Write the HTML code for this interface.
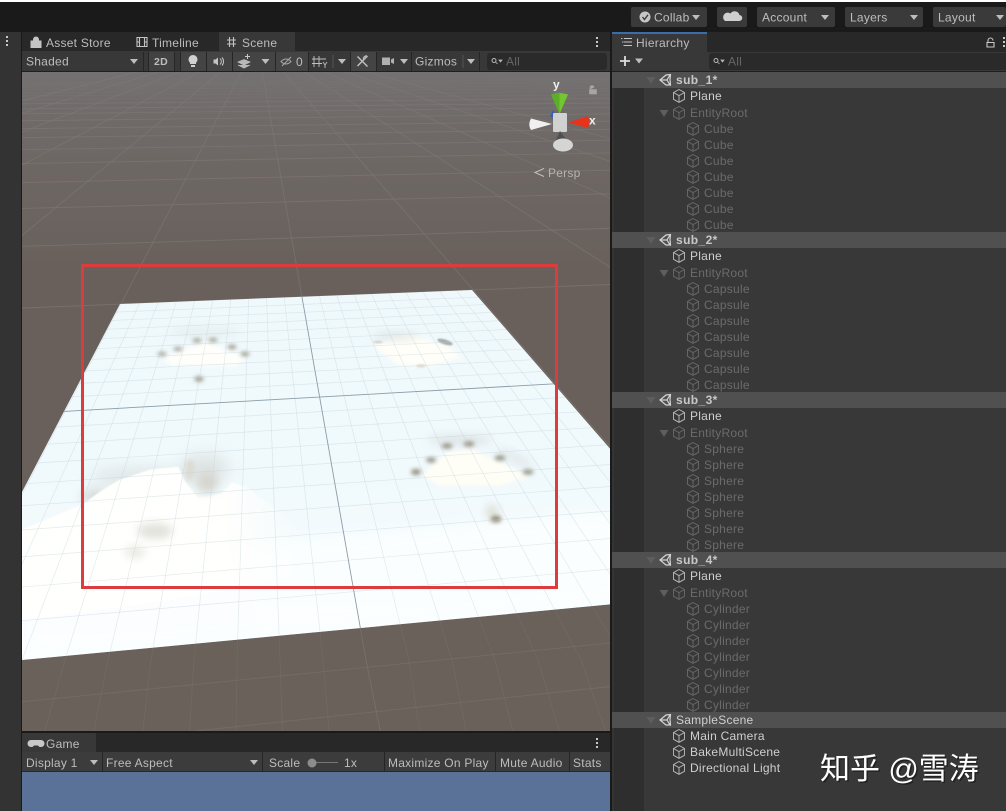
<!DOCTYPE html>
<html><head><meta charset="utf-8"><title>Unity Editor</title>
<style>
html,body{margin:0;padding:0;background:#1a1a1b;width:1006px;height:811px;overflow:hidden}
svg{display:block}
text{font-family:"Liberation Sans","Noto Sans CJK SC",sans-serif;font-size:12px;letter-spacing:.25px;fill:#bdbdbd}
.g text,text.d{fill:#6b6b6b}
.h{font-weight:bold;fill:#c8c8c8;letter-spacing:.4px}
.w{fill:#cfcfcf}
</style></head><body>
<svg width="1006" height="811" viewBox="0 0 1006 811" xmlns="http://www.w3.org/2000/svg">
<defs>
<linearGradient id="gnd" x1="0" y1="0" x2="0" y2="1"><stop offset="0" stop-color="#747172"/><stop offset=".08" stop-color="#6f6a68"/><stop offset=".3" stop-color="#69605b"/><stop offset="1" stop-color="#6b615b"/></linearGradient>
<linearGradient id="pl" x1="0" y1="0" x2="0" y2="1"><stop offset="0" stop-color="#eff9fc"/><stop offset=".5" stop-color="#f0f9fc"/><stop offset="1" stop-color="#f9feff"/></linearGradient>
<linearGradient id="wf" gradientUnits="userSpaceOnUse" x1="225" y1="0" x2="300" y2="0"><stop offset="0" stop-color="#fffffd"/><stop offset="1" stop-color="#fffffd" stop-opacity="0"/></linearGradient>
<clipPath id="sc"><rect x="22" y="72" width="588" height="659"/></clipPath>
<clipPath id="lo"><rect x="22" y="590" width="588" height="141"/></clipPath>
<clipPath id="pc"><polygon points="120,304 472,290 646,490 646,601 22,660 22,492"/></clipPath>
<filter id="b1" x="-50%" y="-50%" width="200%" height="200%"><feGaussianBlur stdDeviation=".8"/></filter>
<filter id="b2" x="-50%" y="-50%" width="200%" height="200%"><feGaussianBlur stdDeviation="2"/></filter>
<filter id="b4" x="-50%" y="-50%" width="200%" height="200%"><feGaussianBlur stdDeviation="4.5"/></filter>
<filter id="b8" x="-50%" y="-50%" width="200%" height="200%"><feGaussianBlur stdDeviation="8"/></filter>
<g id="cb" fill="none" stroke-width=".9" stroke-linejoin="round"><path d="M0-6.5 5.5-3.5V3.3L0 6.3-5.5 3.3V-3.5ZM-5.5-3.5 0-.4 5.5-3.5M0-.4V6.3"/></g>
<g id="un" fill="none" stroke="#d4d4d4" stroke-width="1.200"><path d="M-5 0 1-5 5.500-5.500 5-.5 5.500 5 1 5ZM-5 0H2L5-5M2 0 5 5"/></g>
<path id="ar" d="M-4-2H4L0 3Z" fill="#bdbdbd"/>
<path id="tr" d="M-4.500-3H4.500L0 4Z" fill="#5e5e5e"/>
</defs>

<!-- base -->
<rect width="1006" height="811" fill="#1a1a1b"/>
<rect width="1006" height="2" fill="#fff"/>
<rect x="0" y="32" width="21" height="779" fill="#333"/>

<!-- top toolbar -->
<g fill="#3a3a3a">
<rect x="631" y="7" width="76" height="20" rx="2"/><rect x="717" y="7" width="30" height="20" rx="2"/>
<rect x="757" y="7" width="78" height="20" rx="2"/><rect x="845" y="7" width="78" height="20" rx="2"/><rect x="933" y="7" width="73" height="20" rx="2"/>
</g>
<circle cx="645" cy="17" r="5.500" fill="#c6c6c6"/><path d="M642.500 17 644.500 19.500 648 14.800" fill="none" stroke="#3a3a3a" stroke-width="1.400"/>
<text x="654" y="21.500">Collab</text><use href="#ar" x="696" y="17"/>
<path d="M725 21h14a3 3 0 0 0 .5-6 5 5 0 0 0-9-1.500 3.700 3.700 0 0 0-5.500 7.500Z" fill="#cfcfcf"/>
<text x="762" y="21.500">Account</text><use href="#ar" x="825" y="17"/>
<text x="850" y="21.500">Layers</text><use href="#ar" x="914" y="17"/>
<text x="938" y="21.500">Layout</text><use href="#ar" x="1000" y="17"/>

<!-- left strip dots -->
<g fill="#c8c8c8"><rect x="6" y="36" width="2" height="2"/><rect x="6" y="40" width="2" height="2"/><rect x="6" y="44" width="2" height="2"/></g>

<!-- scene tabs -->
<rect x="22" y="32" width="588" height="19" fill="#282828"/>
<rect x="219" y="32" width="76" height="20" fill="#383838"/>
<path d="M31 41h10v6.500H31ZM33.500 41v-1.500a2.500 2.500 0 0 1 5 0V41" fill="#c4c4c4" stroke="#c4c4c4"/>
<text x="46" y="47">Asset Store</text>
<path d="M137 37.500h10v9h-10ZM139.500 37.500v9M144.500 37.500v9M137 42h2.500M144.500 42h2.500" fill="none" stroke="#c4c4c4" stroke-width="1.100"/>
<text x="152" y="47">Timeline</text>
<path d="M229.500 37v10M233.500 37v10M227 40h9M227 44h9" fill="none" stroke="#c4c4c4" stroke-width="1.100"/>
<text x="242" y="47">Scene</text>
<g fill="#c8c8c8"><rect x="596" y="37" width="2" height="2"/><rect x="596" y="41" width="2" height="2"/><rect x="596" y="45" width="2" height="2"/></g>

<!-- scene toolbar -->
<rect x="22" y="51" width="588" height="21" fill="#383838"/>
<g fill="#444"><rect x="181" y="52" width="52" height="19"/><rect x="233" y="52" width="42" height="19"/><rect x="276" y="52" width="33" height="19"/><rect x="351" y="52" width="25" height="19"/></g>
<g fill="#262626"><rect x="143" y="52" width="1" height="20"/><rect x="148" y="52" width="1" height="20"/><rect x="174" y="52" width="1" height="20"/><rect x="180" y="52" width="1" height="20"/><rect x="206" y="52" width="1" height="20"/><rect x="232" y="52" width="1" height="20"/><rect x="275" y="52" width="1" height="20"/><rect x="308" y="52" width="1" height="20"/><rect x="350" y="52" width="1" height="20"/><rect x="376" y="52" width="1" height="20"/><rect x="411" y="52" width="1" height="20"/><rect x="479" y="52" width="1" height="20"/></g>
<rect x="22" y="71" width="588" height="1" fill="#1f1f1f"/>
<text x="26" y="65.500">Shaded</text><use href="#ar" x="134" y="61"/>
<rect x="149" y="52" width="25" height="19" fill="#424242"/>
<text x="154" y="65" style="font-size:10.500px;font-weight:bold">2D</text>
<path d="M193 55a4.500 4.500 0 0 1 3 7.800V64h-6v-1.200A4.500 4.500 0 0 1 193 55Z" fill="#d0d0d0"/><rect x="191" y="65" width="4" height="2" fill="#d0d0d0"/>
<path d="M213.500 59.500h2l2.500-2v8l-2.500-2h-2Z" fill="#c4c4c4"/><path d="M220 58.500a4 4 0 0 1 0 6M222 57.500a6 6 0 0 1 0 8" fill="none" stroke="#c4c4c4"/>
<path d="M238 62l6-2.500 6 2.500-6 3ZM238 65l6 3 6-3" fill="#b8b8b8" stroke="#b8b8b8" stroke-width=".8"/><path d="M245 56.500h5M247.500 54v5" stroke="#c8c8c8" fill="none"/>
<use href="#ar" x="265.500" y="61"/>
<path d="M281 61.500q5-5 10 0q-5 5-10 0ZM282 66 291 57" fill="none" stroke="#a8a8a8"/>
<text x="296" y="66">0</text>
<path d="M314 56v11M319 56v11M312 59h14M312 63.500h10M323 62l2 3 2-3M325 65v3" fill="none" stroke="#c0c0c0" stroke-width=".9"/>
<line x1="333" y1="55" x2="333" y2="68" stroke="#555"/>
<use href="#ar" x="342" y="61"/>
<path d="M357.500 56.500l10 10M367.500 56l-10 10" fill="none" stroke="#bdbdbd" stroke-width="1.500"/>
<path d="M367 56a3 3 0 0 0-3.500 3.500" fill="none" stroke="#bdbdbd" stroke-width="1.300"/>
<rect x="382" y="57.500" width="8" height="7.500" fill="#b0b0b0"/><path d="M391 59.500l3-1.500v6l-3-1.500Z" fill="#b0b0b0"/>
<use href="#ar" x="404" y="61"/>
<text x="415" y="65.500">Gizmos</text>
<line x1="463" y1="55" x2="463" y2="68" stroke="#555"/><use href="#ar" x="471" y="61"/>
<rect x="487" y="53" width="120" height="17" rx="3" fill="#2a2a2a"/>
<circle cx="494" cy="60.500" r="2" fill="none" stroke="#b8b8b8"/><path d="M495.500 62 497.500 64M499 60h3l-1.500 2Z" stroke="#b8b8b8" fill="#b8b8b8" stroke-width=".8"/>
<text x="506" y="65.500" style="fill:#666">All</text>

<!-- scene view -->
<g clip-path="url(#sc)">
<rect x="22" y="72" width="588" height="659" fill="url(#gnd)"/>
<g clip-path="url(#lo)">
<path opacity=".45" fill="none" stroke="#7d736c" stroke-width=".8" d="M257 42-64 660M257 42-21 660M257 42 22 660M257 42 65 660M257 42 108 660M257 42 151 660M257 42 194 660M257 42 237 660M257 42 280 660M257 42 323 660M257 42 409 660M257 42 452 660M257 42 495 660M257 42 538 660M257 42 581 660M257 42 624 660M257 42 667 660M257 42 710 660M257 42 753 660M257 42 839 660M257 42 882 660M-64 660-150 800M-21 660-90 800M22 660-30 800M65 660 25 800M108 660 80 800M151 660 135 800M194 660 185 800M237 660 235 800M280 660 285 800M323 660 335 800M409 660 430 800M452 660 480 800M495 660 530 800M538 660 580 800M581 660 630 800M624 660 680 800"/>
<path opacity=".55" fill="none" stroke="#7d736c" d="M0 704 6600 44M0 752 6600 44M0 803 6600 44"/>
</g>
<path opacity=".6" fill="none" stroke="#807a76" stroke-width=".9" d="M257 42-2214 660M257 42-1784 660M257 42-1354 660M257 42-924 660M257 42-494 660M257 42-64 660M257 42 366 660M257 42 796 660M257 42 1226 660M257 42 1656 660M257 42 2086 660M257 42 2516 660M366 660 392 790"/>
<path opacity=".65" fill="none" stroke="#807a76" stroke-width=".9" d="M0 309 6600 44M0 247 6600 44M0 209 6600 44M0 183 6600 44M0 164 6600 44M0 150 6600 44M0 138 6600 44M0 129 6600 44M0 121 6600 44M0 114 6600 44M0 109 6600 44M0 104 6600 44"/>
<path opacity=".3" fill="none" stroke="#807a76" stroke-width=".8" d="M0 100 6600 44M0 96 6600 44M0 93 6600 44M0 90 6600 44M0 87 6600 44M0 85 6600 44M0 83 6600 44"/>

<!-- plane -->
<polygon points="120,304 472,290 646,490 646,601 22,660 22,492" fill="url(#pl)"/>
<g clip-path="url(#pc)">
<polygon points="22,570 300,540 610,510 646,601 22,660" fill="#fcfeff" filter="url(#b8)" opacity=".9"/>
<ellipse cx="205" cy="468" rx="24" ry="14" fill="#cfd2ce" filter="url(#b8)" opacity=".55"/>
<ellipse cx="140" cy="478" rx="50" ry="10" fill="#d3d8d8" filter="url(#b8)" opacity=".6"/>
<ellipse cx="95" cy="497" rx="14" ry="8" fill="#cfd3d1" filter="url(#b4)" opacity=".7"/>
<polygon points="84,504 100,492 120,480 150,470 178,467 185,482 198,498 222,494 232,482 248,488 272,505 300,530 300,575 170,600 22,620 22,530" fill="url(#wf)" filter="url(#b1)"/>
<polygon points="84,504 100,492 120,480 150,470 178,467 185,482 198,498 222,494 226,490 226,590 170,600 22,620 22,530" fill="#fffffd" filter="url(#b1)"/>
<ellipse cx="207" cy="482" rx="11" ry="11" fill="#d6d6cf" filter="url(#b4)"/>
<ellipse cx="190" cy="470" rx="5" ry="11" fill="#dcdcd3" filter="url(#b2)"/>
<ellipse cx="155" cy="531" rx="18" ry="8" fill="#e2e2db" filter="url(#b4)"/>
<ellipse cx="135" cy="552" rx="10" ry="6" fill="#e8e8e2" filter="url(#b4)"/>
<polygon points="162,358 205,342 248,358 235,366 172,366" fill="#fffefa" filter="url(#b2)"/>
<ellipse cx="205" cy="332" rx="36" ry="6" fill="#dfe5e7" filter="url(#b4)" opacity=".5"/>
<polygon points="372,346 405,333 448,346 462,358 430,366 400,366" fill="#fffef8" filter="url(#b2)"/>
<ellipse cx="395" cy="336" rx="24" ry="4" fill="#d3d8d8" filter="url(#b4)" opacity=".6"/>
<ellipse cx="445" cy="342" rx="8" ry="2.500" fill="#a8afae" filter="url(#b1)" transform="rotate(18 445 342)"/>
<ellipse cx="378" cy="342" rx="5" ry="1.500" fill="#d6d8cf" filter="url(#b1)"/>
<ellipse cx="421" cy="366" rx="5" ry="2" fill="#e2e2d8" filter="url(#b1)"/>
<polygon points="422,476 447,452 470,448 498,462 530,476 500,486 440,486" fill="#fffef6" filter="url(#b2)"/>
<ellipse cx="460" cy="440" rx="32" ry="6" fill="#d5dadb" filter="url(#b4)" opacity=".6"/>
<ellipse cx="515" cy="458" rx="20" ry="5" fill="#d5dadb" filter="url(#b4)" opacity=".5" transform="rotate(25 515 458)"/>
<ellipse cx="492" cy="512" rx="6" ry="7" fill="#dcdcd2" filter="url(#b4)"/>
<g fill="#928d7a" filter="url(#b2)">
<ellipse cx="162" cy="354" rx="4.500" ry="1.800"/><ellipse cx="178" cy="349" rx="4.500" ry="1.800"/><ellipse cx="197" cy="340.500" rx="4.500" ry="1.800"/><ellipse cx="213" cy="340" rx="4.500" ry="1.800"/><ellipse cx="232" cy="347" rx="4.500" ry="2"/><ellipse cx="245" cy="354" rx="4.500" ry="2"/><ellipse cx="199" cy="379" rx="4.500" ry="2.500"/>
<ellipse cx="416" cy="472" rx="5" ry="3"/><ellipse cx="431" cy="460" rx="5" ry="2.500"/><ellipse cx="447" cy="446" rx="5.500" ry="2.500"/><ellipse cx="469" cy="444" rx="5.500" ry="2.500"/><ellipse cx="500" cy="458" rx="5.500" ry="2.500"/><ellipse cx="528" cy="472" rx="5.500" ry="2.500"/><ellipse cx="496" cy="519" rx="5.500" ry="3.500"/>
</g>
<path fill="none" stroke="#bccfd9" stroke-width=".7" opacity=".42" d="M257 42-64 660M257 42-21 660M257 42 22 660M257 42 65 660M257 42 108 660M257 42 151 660M257 42 194 660M257 42 237 660M257 42 280 660M257 42 323 660M257 42 409 660M257 42 452 660M257 42 495 660M257 42 538 660M257 42 581 660M257 42 624 660M257 42 667 660M257 42 710 660M257 42 753 660M257 42 796 660"/>
<path fill="none" stroke="#bccfd9" stroke-width=".7" opacity=".42" d="M0 316.900 6600 44M0 325.200 6600 44M0 334 6600 44M0 343.300 6600 44M0 353.200 6600 44M0 363.900 6600 44M0 375.300 6600 44M0 387.500 6600 44M0 400.700 6600 44M0 430.400 6600 44M0 447.100 6600 44M0 465.400 6600 44M0 485.400 6600 44M0 507.300 6600 44M0 531.600 6600 44M0 558.600 6600 44M0 588.900 6600 44M0 622.600 6600 44"/>
<path fill="none" stroke="#8b9ca7" stroke-width=".9" d="M0 415 6600 44M257 42 366 660"/>
</g>
</g>

<!-- red rectangle -->
<rect x="82.500" y="265.500" width="474" height="322" fill="none" stroke="#dc3c3e" stroke-width="3"/>

<!-- gizmo -->
<path d="M553 110 550 117 557 118Z" fill="#2f5fc0"/>
<path d="M551 94.500Q559.500 91 568 94.500L559.500 114Z" fill="#5cae28"/>
<path d="M559.500 93V114L568 94.500Z" fill="#7ed034" opacity=".7"/>
<rect x="553" y="113" width="14" height="19" rx="1" fill="#d0d1d1"/>
<path d="M568 122.500 588 116Q590 122 588 128Z" fill="#e8331a"/>
<path d="M552 124 531 118.500Q527.500 124.500 531 130Z" fill="#f0f0f0"/>
<path d="M560 131 553 146H571Z" fill="#4f4f4f"/>
<ellipse cx="563" cy="145" rx="10" ry="6.500" fill="#d5d5d5"/>
<text x="553" y="88.500" style="font-weight:bold;fill:#f0f0f0;font-size:12px">y</text>
<text x="589" y="124.500" style="font-weight:bold;fill:#f0f0f0;font-size:12px">x</text>
<path d="M590 89.500v-2a2 2 0 0 1 4 0M589.500 89.500h7v4.500h-7Z" fill="#a8a5a3" stroke="#a8a5a3" stroke-width=".6"/>
<path d="M544 168.500 535 172.500 544 176.500" fill="none" stroke="#c4c0bd"/>
<text x="548" y="177" style="fill:#b8b4b1">Persp</text>

<!-- game panel -->
<rect x="22" y="733" width="588" height="19" fill="#282828"/>
<rect x="22" y="733" width="74" height="19" fill="#383838"/>
<path d="M31 740h10a3 3 0 0 1 0 7h-1.500l-1.500-1.500h-4l-1.500 1.500H31a3 3 0 0 1 0-7Z" fill="#c8c8c8"/>
<text x="46" y="748">Game</text>
<g fill="#c8c8c8"><rect x="596" y="738" width="2" height="2"/><rect x="596" y="742" width="2" height="2"/><rect x="596" y="746" width="2" height="2"/></g>
<rect x="22" y="752" width="588" height="20" fill="#3c3c3c"/>
<g fill="#252525"><rect x="102" y="752" width="1" height="20"/><rect x="262" y="752" width="1" height="20"/><rect x="384" y="752" width="1" height="20"/><rect x="495" y="752" width="1" height="20"/><rect x="569" y="752" width="1" height="20"/></g>
<text x="26" y="767">Display 1</text><use href="#ar" x="94" y="762"/>
<text x="106" y="767">Free Aspect</text><use href="#ar" x="254" y="762"/>
<text x="269" y="767">Scale</text>
<rect x="312" y="762" width="26" height="1" fill="#777"/><circle cx="312" cy="763" r="4.500" fill="#8c8c8c"/>
<text x="344" y="767">1x</text>
<text x="388" y="767">Maximize On Play</text>
<text x="500" y="767">Mute Audio</text>
<text x="573" y="767">Stats</text>
<rect x="22" y="771" width="588" height="1" fill="#1a2a44"/>
<rect x="22" y="772" width="588" height="39" fill="#5a7298"/>

<!-- hierarchy -->
<rect x="612" y="32" width="394" height="779" fill="#383838"/>
<rect x="612" y="32" width="394" height="20" fill="#282828"/>
<rect x="612" y="32" width="95" height="20" fill="#383838"/>
<rect x="612" y="32" width="95" height="2" fill="#3a6ea8"/>
<path d="M624 38.500h8M624 42h8M624 45.500h8" stroke="#c4c4c4" fill="none"/><path d="M621 38.500h1.500M622 42h1.500M623 45.500h.5" stroke="#c4c4c4"/>
<text x="636" y="47">Hierarchy</text>
<path d="M987 42.500h7v4.500h-7ZM988 42.500v-2a2.500 2.500 0 0 1 5 0" fill="none" stroke="#c8c8c8" stroke-width="1.100"/>
<g fill="#c8c8c8"><rect x="1003" y="37" width="2" height="2"/><rect x="1003" y="41" width="2" height="2"/><rect x="1003" y="45" width="2" height="2"/></g>
<rect x="612" y="52" width="394" height="20" fill="#383838"/>
<rect x="612" y="71" width="394" height="1" fill="#1f1f1f"/>
<path d="M620 61h10M625 56v10" stroke="#dcdcdc" stroke-width="1.800"/><use href="#ar" x="639" y="60.500"/>
<rect x="709" y="53" width="300" height="17" rx="3" fill="#2a2a2a"/>
<circle cx="716" cy="60.500" r="2" fill="none" stroke="#b8b8b8"/><path d="M717.500 62 719.500 64M721 60h3l-1.500 2Z" stroke="#b8b8b8" fill="#b8b8b8" stroke-width=".8"/>
<text x="728" y="65.500" style="fill:#666">All</text>
<rect x="612" y="72" width="32" height="739" fill="#2e2e2e"/>
<rect x="612" y="72" width="2" height="739" fill="#343434"/>

<!-- hierarchy headers -->
<g fill="#505050"><rect x="612" y="72" width="394" height="16"/><rect x="612" y="232" width="394" height="16"/><rect x="612" y="392" width="394" height="16"/><rect x="612" y="552" width="394" height="16"/><rect x="612" y="712" width="394" height="16"/></g>

<g>
<use href="#tr" x="651" y="80"/><use href="#un" x="665" y="80"/><text x="676" y="84" class="h">sub_1*</text>
<use href="#cb" x="679" y="96" stroke="#bdbdbd"/><text x="690" y="100" class="w">Plane</text>
<use href="#tr" x="664" y="113"/><use href="#cb" x="679" y="113" stroke="#6b6b6b"/><text x="690" y="117" class="d">EntityRoot</text>
<g class="g"><g stroke="#6b6b6b"><use href="#cb" x="693" y="129"/><use href="#cb" x="693" y="145"/><use href="#cb" x="693" y="161"/><use href="#cb" x="693" y="177"/><use href="#cb" x="693" y="193"/><use href="#cb" x="693" y="209"/><use href="#cb" x="693" y="225"/></g>
<text x="704" y="133">Cube</text><text x="704" y="149">Cube</text><text x="704" y="165">Cube</text><text x="704" y="181">Cube</text><text x="704" y="197">Cube</text><text x="704" y="213">Cube</text><text x="704" y="229">Cube</text></g>
</g>
<g transform="translate(0 160)">
<use href="#tr" x="651" y="80"/><use href="#un" x="665" y="80"/><text x="676" y="84" class="h">sub_2*</text>
<use href="#cb" x="679" y="96" stroke="#bdbdbd"/><text x="690" y="100" class="w">Plane</text>
<use href="#tr" x="664" y="113"/><use href="#cb" x="679" y="113" stroke="#6b6b6b"/><text x="690" y="117" class="d">EntityRoot</text>
<g class="g"><g stroke="#6b6b6b"><use href="#cb" x="693" y="129"/><use href="#cb" x="693" y="145"/><use href="#cb" x="693" y="161"/><use href="#cb" x="693" y="177"/><use href="#cb" x="693" y="193"/><use href="#cb" x="693" y="209"/><use href="#cb" x="693" y="225"/></g>
<text x="704" y="133">Capsule</text><text x="704" y="149">Capsule</text><text x="704" y="165">Capsule</text><text x="704" y="181">Capsule</text><text x="704" y="197">Capsule</text><text x="704" y="213">Capsule</text><text x="704" y="229">Capsule</text></g>
</g>
<g transform="translate(0 320)">
<use href="#tr" x="651" y="80"/><use href="#un" x="665" y="80"/><text x="676" y="84" class="h">sub_3*</text>
<use href="#cb" x="679" y="96" stroke="#bdbdbd"/><text x="690" y="100" class="w">Plane</text>
<use href="#tr" x="664" y="113"/><use href="#cb" x="679" y="113" stroke="#6b6b6b"/><text x="690" y="117" class="d">EntityRoot</text>
<g class="g"><g stroke="#6b6b6b"><use href="#cb" x="693" y="129"/><use href="#cb" x="693" y="145"/><use href="#cb" x="693" y="161"/><use href="#cb" x="693" y="177"/><use href="#cb" x="693" y="193"/><use href="#cb" x="693" y="209"/><use href="#cb" x="693" y="225"/></g>
<text x="704" y="133">Sphere</text><text x="704" y="149">Sphere</text><text x="704" y="165">Sphere</text><text x="704" y="181">Sphere</text><text x="704" y="197">Sphere</text><text x="704" y="213">Sphere</text><text x="704" y="229">Sphere</text></g>
</g>
<g transform="translate(0 480)">
<use href="#tr" x="651" y="80"/><use href="#un" x="665" y="80"/><text x="676" y="84" class="h">sub_4*</text>
<use href="#cb" x="679" y="96" stroke="#bdbdbd"/><text x="690" y="100" class="w">Plane</text>
<use href="#tr" x="664" y="113"/><use href="#cb" x="679" y="113" stroke="#6b6b6b"/><text x="690" y="117" class="d">EntityRoot</text>
<g class="g"><g stroke="#6b6b6b"><use href="#cb" x="693" y="129"/><use href="#cb" x="693" y="145"/><use href="#cb" x="693" y="161"/><use href="#cb" x="693" y="177"/><use href="#cb" x="693" y="193"/><use href="#cb" x="693" y="209"/><use href="#cb" x="693" y="225"/></g>
<text x="704" y="133">Cylinder</text><text x="704" y="149">Cylinder</text><text x="704" y="165">Cylinder</text><text x="704" y="181">Cylinder</text><text x="704" y="197">Cylinder</text><text x="704" y="213">Cylinder</text><text x="704" y="229">Cylinder</text></g>
</g>
<use href="#tr" x="651" y="720"/><use href="#un" x="665" y="720"/><text x="676" y="724" class="w">SampleScene</text>
<use href="#cb" x="679" y="736" stroke="#bdbdbd"/><text x="690" y="740" class="w">Main Camera</text>
<use href="#cb" x="679" y="752" stroke="#bdbdbd"/><text x="690" y="756" class="w">BakeMultiScene</text>
<use href="#cb" x="679" y="768" stroke="#bdbdbd"/><text x="690" y="772" class="w">Directional Light</text>

<!-- watermark -->
<text x="821.500" y="780.500" style="font-size:30px;letter-spacing:0;fill:#111;opacity:.55">知乎 @雪涛</text>
<text x="820" y="779" style="font-size:30px;letter-spacing:0;fill:#fff">知乎 @雪涛</text>
</svg>
</body></html>
